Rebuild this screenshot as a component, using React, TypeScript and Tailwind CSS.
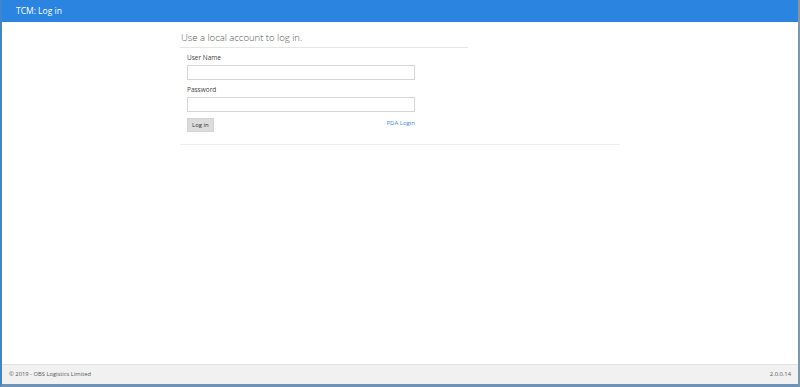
export default function App() {
  return (
    <div className="w-[800px] h-[387px] flex flex-col bg-white border-l-2 border-l-[#3f86c9] border-r-2 border-r-[#7f97ad] border-b-[3px] border-b-[#6f93b8] font-['Open_Sans',sans-serif] overflow-hidden">
      {/* Header */}
      <header className="h-[22px] shrink-0 bg-[#2a84e0] text-white text-[8.5px] flex items-center pl-[14px]">
        TCM: Log in
      </header>

      {/* Content */}
      <main className="flex-1 pl-[178px] pt-[9px]">
        <div className="w-[440px]">
          <div className="w-[288px]">
            <h2 className="text-[9.5px] font-light text-[#555] pl-[1px] leading-[13px] pb-[3px] border-b border-[#e6e6e6]">
              Use a local account to log in.
            </h2>
            <form className="pl-[7px] pt-[5px]" onSubmit={(e) => e.preventDefault()}>
              <label className="block text-[6.5px] text-[#444] leading-[10px] mb-[2px]">User Name</label>
              <input className="block w-[228px] h-[15px] border border-[#d6d6d6] bg-white" />
              <label className="block text-[6.5px] text-[#444] leading-[10px] mt-[5px] mb-[2px]">Password</label>
              <input type="password" className="block w-[228px] h-[15px] border border-[#d6d6d6] bg-white" />
              <div className="w-[228px] flex items-end justify-between mt-[6px]">
                <button className="h-[14px] px-[4px] bg-[#dcdcdc] text-[6px] text-[#333] border border-[#d4d4d4]">
                  Log in
                </button>
                <a href="#" className="text-[6px] text-[#3f86dc] mb-[4px]">PDA Login</a>
              </div>
            </form>
          </div>
          <div className="mt-[12px] border-b border-[#eee]" />
        </div>
      </main>

      {/* Footer */}
      <footer className="h-[20px] shrink-0 bg-[#f1f1f1] border-t border-[#e2e2e2] flex items-center justify-between pl-[7px] pr-[7px] text-[5.8px] text-[#555]">
        <span>© 2019 - OBS Logistics Limited</span>
        <span>2.0.0.14</span>
      </footer>
    </div>
  );
}
